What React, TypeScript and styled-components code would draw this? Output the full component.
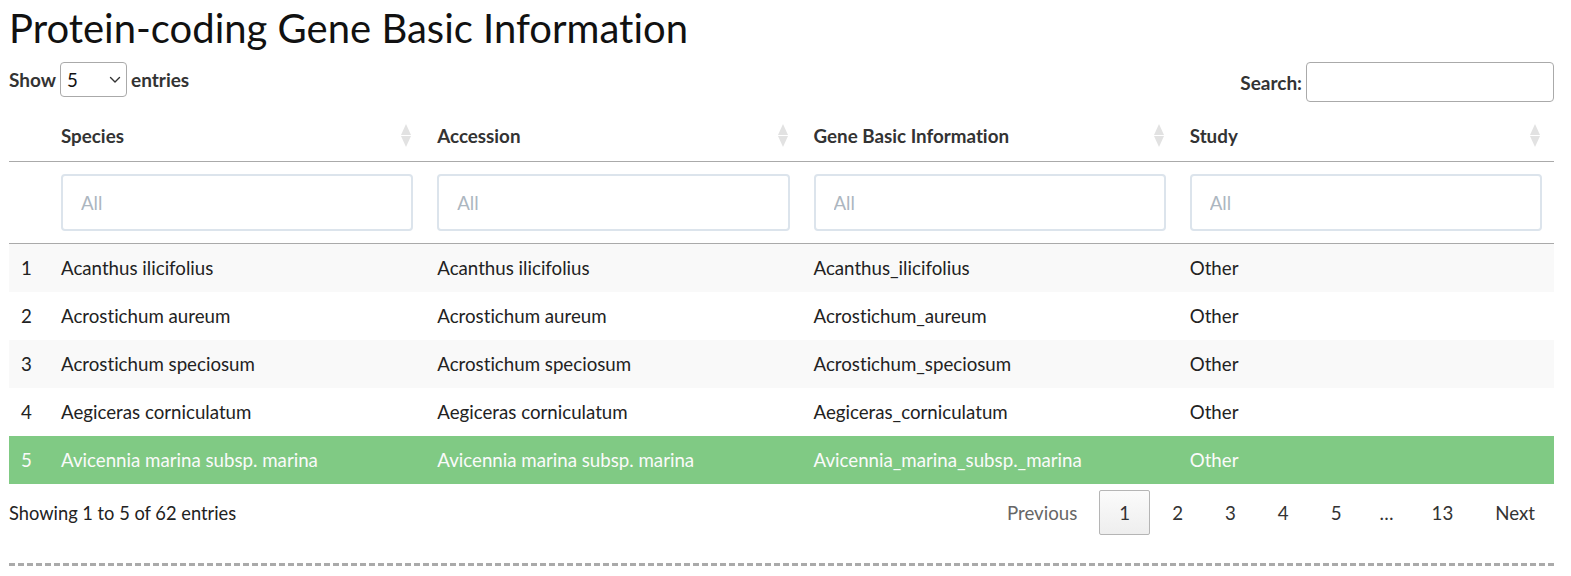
import styled, { createGlobalStyle } from 'styled-components';

const GlobalStyle = createGlobalStyle`
    html, body {
        margin: 0;
        padding: 0;
        background: #fff;
    }
    body {
        font-family: Lato, "Open Sans", sans-serif;
        font-size: 18.7px;
        color: #333;
        font-variant-ligatures: none;
    }
`;

const Page = styled.div`
    width: 1545px;
    padding: 0 9px;
`;

const Title = styled.h1`
    margin: 8px 0 0;
    font-size: 40px;
    font-weight: 400;
    line-height: 40px;
    color: #111;
`;

const Toolbar = styled.div`
    display: flex;
    justify-content: space-between;
    align-items: flex-start;
    margin-top: 14px;
`;

const Control = styled.label<{ $h: number }>`
    display: flex;
    align-items: center;
    gap: 4px;
    height: ${(p) => p.$h}px;
    font-size: 19px;
    font-weight: 700;
    color: #333;
`;

const SelectWrap = styled.span`
    position: relative;
    display: inline-flex;
`;

const Select = styled.select`
    appearance: none;
    width: 67px;
    height: 35px;
    padding: 0 4px 0 6px;
    border: 1px solid #aaa;
    border-radius: 4px;
    background: #fff;
    font-family: Lato, sans-serif;
    font-size: 18.7px;
    color: #111;
`;

const Chevron = styled.svg`
    position: absolute;
    right: 6px;
    top: 14px;
    pointer-events: none;
`;

const SearchInput = styled.input`
    width: 248px;
    height: 40px;
    box-sizing: border-box;
    border: 1px solid #aaa;
    border-radius: 4px;
    padding: 0 8px;
    font-family: Lato, sans-serif;
    font-size: 18px;
`;

const Table = styled.table`
    width: 1545px;
    margin-top: 8px;
    border-collapse: collapse;
    table-layout: fixed;
`;

const Th = styled.th`
    height: 51px;
    padding: 0 14px 0 12px;
    text-align: left;
    font-size: 18.8px;
    font-weight: 700;
    color: #333;
    border-bottom: 1px solid #aaa;
`;

const HeadInner = styled.div`
    display: flex;
    justify-content: space-between;
    align-items: center;
`;

const FilterCell = styled.td`
    padding: 12px;
    border-bottom: 1px solid #aaa;
`;

const FilterInput = styled.input`
    display: block;
    width: 100%;
    height: 57px;
    box-sizing: border-box;
    border: 2px solid #dce4ec;
    border-radius: 4px;
    padding: 0 18px;
    font-family: Lato, sans-serif;
    font-size: 18.7px;
    color: #333;
    &::placeholder {
        color: #acb6c0;
    }
`;

const Row = styled.tr<{ $odd: boolean; $selected: boolean }>`
    background: ${(p) => (p.$selected ? '#80ca84' : p.$odd ? '#f9f9f9' : '#fff')};
    color: ${(p) => (p.$selected ? '#fafafa' : '#222')};
    & + & td {
        border-top: 1px solid #ddd;
    }
`;

const Td = styled.td`
    height: 48px;
    padding: 0 12px;
    font-size: 18.7px;
    white-space: nowrap;
`;

const Footer = styled.div`
    display: flex;
    justify-content: space-between;
    align-items: center;
    height: 45px;
    margin-top: 6px;
`;

const Info = styled.div`
    font-size: 18.3px;
    color: #222;
`;

const Pager = styled.div`
    display: flex;
    align-items: center;
    gap: 2px;
    margin-right: -1px;
`;

const PageButton = styled.span<{ $current?: boolean; $disabled?: boolean }>`
    box-sizing: border-box;
    height: 45px;
    display: flex;
    align-items: center;
    padding: 0 19px;
    border: 1px solid ${(p) => (p.$current ? '#b5b5b5' : 'transparent')};
    border-radius: 2px;
    background: ${(p) => (p.$current ? 'linear-gradient(to bottom, #fbfbfb 0%, #eeeeee 100%)' : 'transparent')};
    color: ${(p) => (p.$disabled ? '#666' : '#333')};
    font-size: 18.7px;
`;

const Ellipsis = styled.span`
    padding: 0 16px;
    color: #333;
    font-size: 18.7px;
`;

const Divider = styled.div`
    margin-top: 28px;
    border-top: 3px dashed #aaa;
`;

function SortIcon() {
    return (
        <svg width="10" height="23" viewBox="0 0 10 23">
            <path d="M5 0 L10 11 L0 11 Z" fill="#e2e2e2" />
            <path d="M0 12 L10 12 L5 23 Z" fill="#e2e2e2" />
        </svg>
    );
}

const columns = ['Species', 'Accession', 'Gene Basic Information', 'Study'];

const rows = [
    ['Acanthus ilicifolius', 'Acanthus ilicifolius', 'Acanthus_ilicifolius', 'Other'],
    ['Acrostichum aureum', 'Acrostichum aureum', 'Acrostichum_aureum', 'Other'],
    ['Acrostichum speciosum', 'Acrostichum speciosum', 'Acrostichum_speciosum', 'Other'],
    ['Aegiceras corniculatum', 'Aegiceras corniculatum', 'Aegiceras_corniculatum', 'Other'],
    ['Avicennia marina subsp. marina', 'Avicennia marina subsp. marina', 'Avicennia_marina_subsp._marina', 'Other'],
];

export default function App() {
    return (
        <Page>
            <GlobalStyle />
            <Title>Protein-coding Gene Basic Information</Title>
            <Toolbar>
                <Control $h={35}>
                    Show
                    <SelectWrap>
                        <Select defaultValue="5">
                            <option value="5">5</option>
                            <option value="10">10</option>
                            <option value="25">25</option>
                        </Select>
                        <Chevron width="12" height="8" viewBox="0 0 12 8">
                            <path d="M1.5 1.5 L6 6 L10.5 1.5" fill="none" stroke="#333" strokeWidth="1.4" strokeLinecap="round" strokeLinejoin="round" />
                        </Chevron>
                    </SelectWrap>
                    entries
                </Control>
                <Control $h={40}>
                    Search:
                    <SearchInput type="search" />
                </Control>
            </Toolbar>
            <Table>
                <colgroup>
                    <col style={{ width: 40 }} />
                    <col />
                    <col />
                    <col />
                    <col />
                </colgroup>
                <thead>
                    <tr>
                        <Th />
                        {columns.map((c) => (
                            <Th key={c}>
                                <HeadInner>
                                    <span>{c}</span>
                                    <SortIcon />
                                </HeadInner>
                            </Th>
                        ))}
                    </tr>
                    <tr>
                        <FilterCell />
                        {columns.map((c) => (
                            <FilterCell key={c}>
                                <FilterInput placeholder="All" />
                            </FilterCell>
                        ))}
                    </tr>
                </thead>
                <tbody>
                    {rows.map((r, i) => (
                        <Row key={i} $odd={i % 2 === 0} $selected={i === 4}>
                            <Td>{i + 1}</Td>
                            {r.map((v, j) => (
                                <Td key={j}>{v}</Td>
                            ))}
                        </Row>
                    ))}
                </tbody>
            </Table>
            <Footer>
                <Info>Showing 1 to 5 of 62 entries</Info>
                <Pager>
                    <PageButton $disabled>Previous</PageButton>
                    <PageButton $current>1</PageButton>
                    <PageButton>2</PageButton>
                    <PageButton>3</PageButton>
                    <PageButton>4</PageButton>
                    <PageButton>5</PageButton>
                    <Ellipsis>…</Ellipsis>
                    <PageButton>13</PageButton>
                    <PageButton>Next</PageButton>
                </Pager>
            </Footer>
            <Divider />
        </Page>
    );
}
